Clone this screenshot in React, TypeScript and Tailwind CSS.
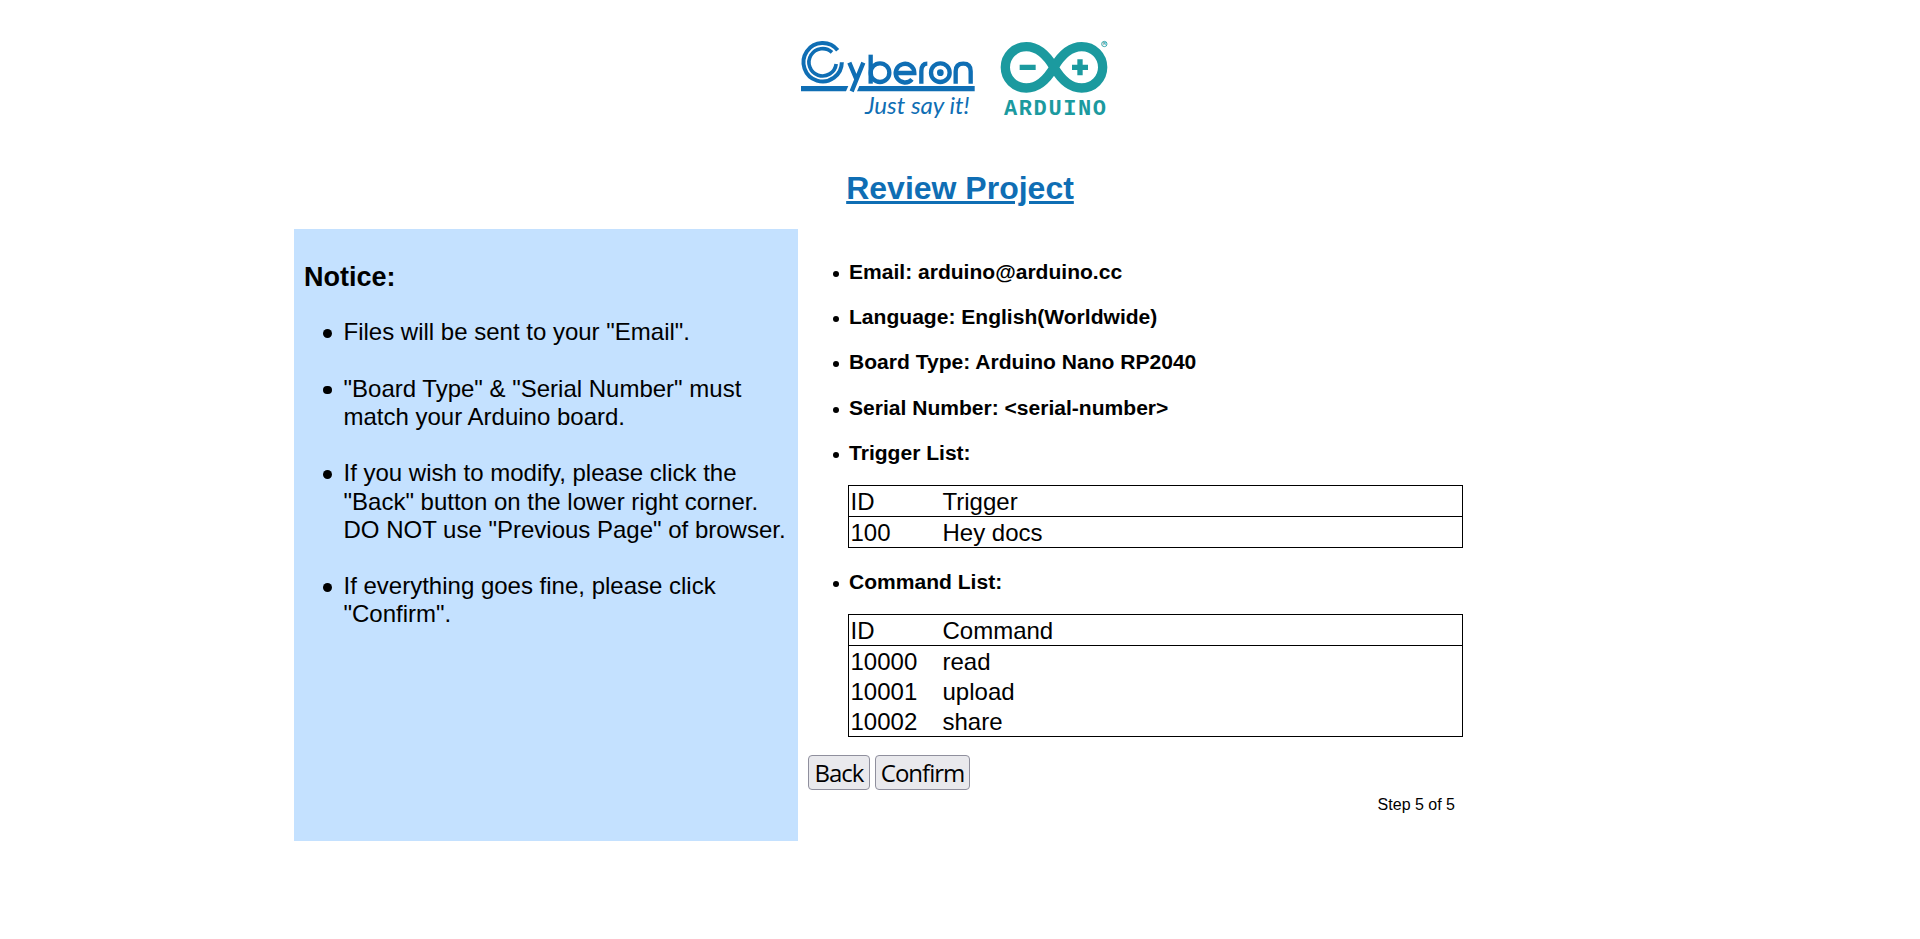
const notices: string[][] = [
  ['Files will be sent to your "Email".'],
  ['"Board Type" & "Serial Number" must', 'match your Arduino board.'],
  ['If you wish to modify, please click the', '"Back" button on the lower right corner.', 'DO NOT use "Previous Page" of browser.'],
  ['If everything goes fine, please click', '"Confirm".'],
];

const details = [
  "Email: arduino@arduino.cc",
  "Language: English(Worldwide)",
  "Board Type: Arduino Nano RP2040",
  "Serial Number: <serial-number>",
];

function CyberonLogo() {
  return (
    <svg className="h-[100px] w-[200px]" viewBox="0 0 600 300" fill="none" stroke="#0f6eb4">
      <path d="M143 61A57.5 57.5 0 1 0 155.5 97" strokeWidth="12" />
      <path d="M126 67A41 41 0 1 0 138.5 102" strokeWidth="11" />
      <g fill="#0f6eb4" stroke="none">
        <path d="M33 168H175L168 184H33Z" />
        <path d="M208 168H554V184H201Z" />
      </g>
      <g strokeWidth="13">
        <path d="M178 98L200 150M220 98L185 184" />
        <path d="M242 74V161" />
        <circle cx="270" cy="128" r="28" />
        <path d="M317 129H373A28 28 0 1 0 366 148" />
        <path d="M394 161V124Q394 101 412 101" />
        <circle cx="451" cy="128" r="28" />
        <path d="M497 161V124Q497 101 520 101Q542 101 542 124V161" />
      </g>
      <circle cx="451" cy="128" r="10" fill="#0f6eb4" stroke="none" />
      <text x="225" y="253" textLength="314" lengthAdjust="spacingAndGlyphs" fill="#0f6eb4" stroke="none" className="font-[Lato,sans-serif] text-[70px] italic">Just say it!</text>
    </svg>
  );
}

function ArduinoLogo() {
  return (
    <svg className="h-[100px] w-[150px]" viewBox="0 0 450 300" fill="none" stroke="#1b9a9f">
      <path d="M222 112C199 73 174 50 139 50C103 50 76 78 76 112C76 146 103 174 139 174C174 174 199 151 222 112C245 73 270 50 305 50C341 50 368 78 368 112C368 146 341 174 305 174C270 174 245 151 222 112Z" strokeWidth="28" />
      <path d="M119 112H167M276 112H324M300 88V136" strokeWidth="16" />
      <circle cx="373" cy="42" r="8" strokeWidth="2.5" />
      <text x="373" y="46" textAnchor="middle" fill="#1b9a9f" stroke="none" className="font-['Liberation_Sans',sans-serif] text-[12px] font-bold">R</text>
      <text x="72" y="254" textLength="306" lengthAdjust="spacing" fill="#1b9a9f" stroke="none" className="font-['Liberation_Mono',monospace] text-[66px] font-bold">ARDUINO</text>
    </svg>
  );
}

function DetailHeading({ text }: { text: string }) {
  return (
    <h3 className="flex h-6 items-center text-[21.06px] leading-6 font-bold">
      <span className="mt-[4px] mr-[10px] size-[6px] shrink-0 rounded-full bg-black" />
      {text}
    </h3>
  );
}

function DataTable({ label, rows }: { label: string; rows: string[][] }) {
  return (
    <div className="ml-[15px] w-[615px] border border-black text-2xl leading-[32px]">
      <div className="flex h-[31px] border-b border-black pl-[1.5px]">
        <span className="w-[92px]">ID</span>
        <span>{label}</span>
      </div>
      {rows.map(([id, name]) => (
        <div key={id} className="flex h-[30px] pl-[1.5px]">
          <span className="w-[92px]">{id}</span>
          <span>{name}</span>
        </div>
      ))}
    </div>
  );
}

export default function App() {
  return (
    <div className="h-[939px] overflow-hidden bg-white font-['Liberation_Sans',Arial,sans-serif] text-black">
      <header className="flex flex-col items-center pt-[30px]">
        <div className="flex w-[340px]">
          <div className="w-[190px] shrink-0"><CyberonLogo /></div>
          <ArduinoLogo />
        </div>
        <h1 className="mt-[40px] h-[59px] text-[32px] leading-[36px] font-bold text-[#0f6eb4] underline">Review Project</h1>
      </header>
      <main className="mx-auto flex h-[612px] w-[1332px]">
        <aside className="w-[504px] shrink-0 bg-[#c4e1ff] pt-[32px] pl-[10px]">
          <h2 className="text-[27px] leading-8 font-bold">Notice:</h2>
          <ul className="mt-[25.4px] flex flex-col gap-[28.4px] text-2xl leading-[28.1px]">
            {notices.map((lines) => (
              <li key={lines[0]} className="flex pl-[19px]">
                <span className="mt-[11px] mr-[12px] size-[8.5px] shrink-0 rounded-full bg-black" />
                <div className="whitespace-nowrap">
                  {lines.map((line) => <p key={line}>{line}</p>)}
                </div>
              </li>
            ))}
          </ul>
        </aside>
        <section className="w-[665px] pt-[31px] pl-[10px]">
          <div className="ml-[25px]">
            <div className="flex flex-col gap-[21.2px]">
              {details.map((text) => <DetailHeading key={text} text={text} />)}
              <DetailHeading text="Trigger List:" />
            </div>
            <div className="mt-5"><DataTable label="Trigger" rows={[["100", "Hey docs"]]} /></div>
            <div className="mt-[22px] mb-5"><DetailHeading text="Command List:" /></div>
            <DataTable label="Command" rows={[["10000", "read"], ["10001", "upload"], ["10002", "share"]]} />
          </div>
          <div className="mt-[18px] flex gap-[5px] font-['Open_Sans',sans-serif] text-2xl">
            <button className="flex h-[35px] w-[62px] items-center justify-center rounded-[4px] border border-[#8f8f9d] bg-[#e9e9ed] pt-px tracking-[-1px]">Back</button>
            <button className="flex h-[35px] w-[95px] items-center justify-center rounded-[4px] border border-[#8f8f9d] bg-[#e9e9ed] pt-px tracking-[-1px]">Confirm</button>
          </div>
          <p className="mt-[5px] pr-[8px] text-right text-base leading-[19px]">Step 5 of 5</p>
        </section>
      </main>
    </div>
  );
}
